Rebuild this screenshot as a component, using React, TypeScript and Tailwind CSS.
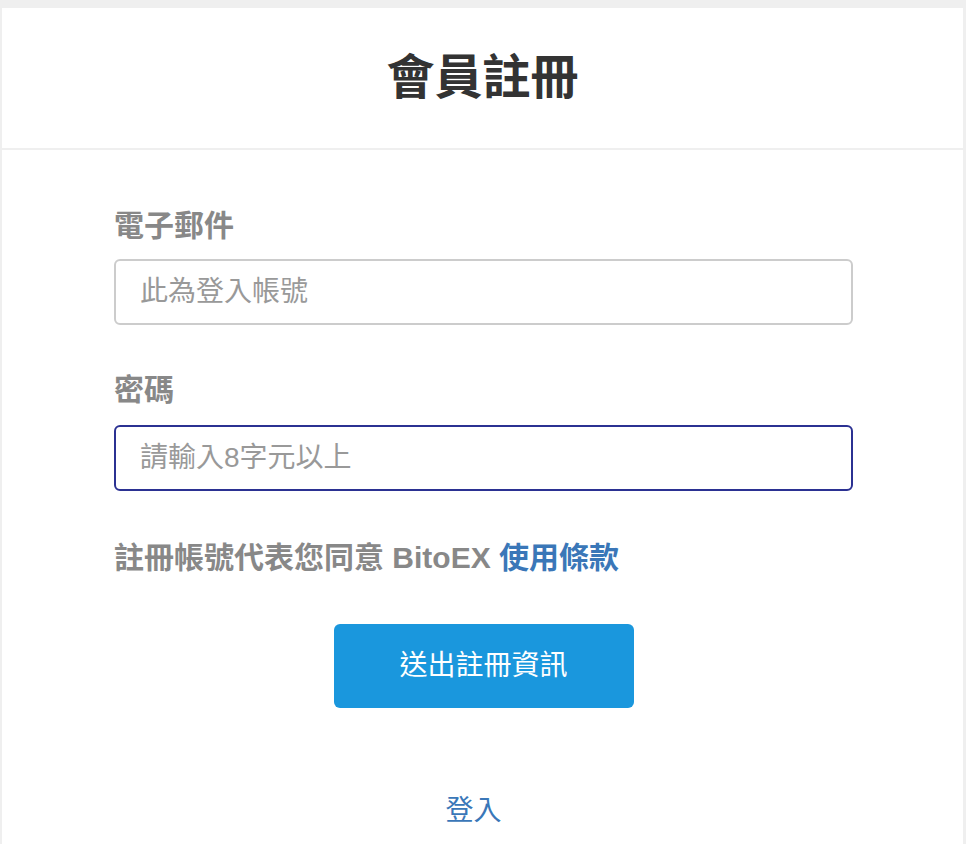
import { useState } from 'react';

const font = { fontFamily: '"Liberation Sans", "Noto Sans CJK TC", sans-serif' };

export default function App() {
    const [email, setEmail] = useState('');
    const [password, setPassword] = useState('');

    return (
        <div className="min-h-screen bg-[#efefef] pt-2 pl-[2px] pr-[3px]" style={font}>
            <header className="bg-white h-[140px] flex items-center justify-center">
                <h1 className="text-[48px] font-bold text-[#333333] leading-none">會員註冊</h1>
            </header>

            <main className="bg-white mt-[2px] pl-[112px] pr-[110px] pt-[55px] pb-10">
                <label className="block text-[30px] leading-[42px] font-bold text-[#888888]">電子郵件</label>
                <input
                    type="email"
                    value={email}
                    onChange={e => setEmail(e.target.value)}
                    placeholder="此為登入帳號"
                    className="mt-3 block w-full h-[66px] rounded-[6px] border-2 border-[#cccccc] bg-white px-6 text-[28px] text-[#333333] placeholder:text-[#999999] outline-none"
                />

                <label className="block mt-[44px] text-[30px] leading-[42px] font-bold text-[#888888]">密碼</label>
                <input
                    type="password"
                    value={password}
                    onChange={e => setPassword(e.target.value)}
                    placeholder="請輸入8字元以上"
                    className="mt-[14px] block w-full h-[66px] rounded-[6px] border-2 border-[#2b3192] bg-white px-6 text-[28px] text-[#333333] placeholder:text-[#999999] outline-none"
                />

                <p className="mt-[46px] text-[30px] leading-[42px] font-bold text-[#888888]">
                    註冊帳號代表您同意 BitoEX <a href="#" className="text-[#3a77b8]">使用條款</a>
                </p>

                <div className="mt-[45px] flex justify-center">
                    <button className="w-[300px] h-[84px] rounded-[6px] bg-[#1a97dd] text-white text-[28px]">
                        送出註冊資訊
                    </button>
                </div>

                <div className="mt-[82px] flex justify-center">
                    <a href="#" className="mr-[20px] text-[28px] leading-[42px] text-[#3a77b8]">登入</a>
                </div>
            </main>
        </div>
    );
}
